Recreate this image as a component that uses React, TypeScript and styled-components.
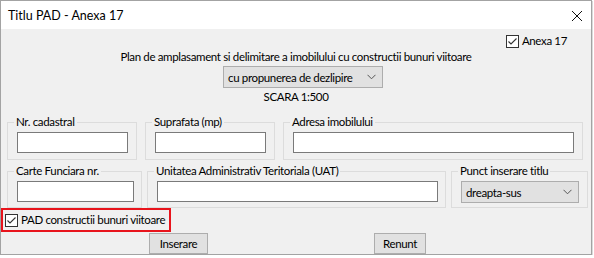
import styled, { createGlobalStyle } from 'styled-components';

const GlobalStyle = createGlobalStyle`
  html, body {
    margin: 0;
    padding: 0;
    background: #ffffff;
  }
  body {
    font-family: "Lato", "Segoe UI", sans-serif;
    font-size: 11.5px;
    letter-spacing: -0.35px;
    color: #000;
  }
`;

const Window = styled.div`
  width: 590px;
  height: 253px;
  border: 1px solid #a3a3a3;
  box-shadow: 1px 1px 0 #dadada;
  background: #f0f0f0;
  display: flex;
  flex-direction: column;
`;

const TitleBar = styled.div`
  height: 28px;
  background: #fff;
  display: flex;
  align-items: center;
  justify-content: space-between;
  padding: 0 8px 0 7px;
`;

const Title = styled.span`
  font-size: 12.5px;
  letter-spacing: 0;
`;

const CloseButton = styled.span`
  display: flex;
  width: 12px;
  height: 12px;
  margin-top: 1px;
`;

const Body = styled.div`
  flex: 1;
  display: flex;
  flex-direction: column;
`;

const TopRight = styled.div`
  display: flex;
  justify-content: flex-end;
  padding: 5px 24px 0 0;
`;

const CheckLabel = styled.label`
  display: flex;
  align-items: center;
  gap: 3px;
  line-height: 14px;
  white-space: nowrap;
`;

const Box = styled.span`
  width: 11px;
  height: 11px;
  border: 1px solid #333;
  background: #fff;
  display: flex;
  align-items: center;
  justify-content: center;
`;

const Heading = styled.div`
  text-align: center;
  line-height: 16px;
  margin-top: 1px;
`;

const CenterRow = styled.div`
  display: flex;
  justify-content: center;
  padding-left: 14px;
  margin-top: 1px;
`;

const Combo = styled.div<{ $w: number }>`
  width: ${p => p.$w}px;
  height: 22px;
  box-sizing: border-box;
  background: #e1e1e1;
  border: 1px solid #adadad;
  display: flex;
  align-items: center;
  justify-content: space-between;
  padding: 0 6px 0 4px;
  white-space: nowrap;
`;

const Scale = styled.div`
  text-align: center;
  line-height: 16px;
  margin-top: 1px;
`;

const GroupRow = styled.div<{ $cols: string; $top: number; $gap: number }>`
  display: grid;
  grid-template-columns: ${p => p.$cols};
  column-gap: ${p => p.$gap}px;
  padding-left: 6px;
  margin-top: ${p => p.$top}px;
`;

const Group = styled.fieldset<{ $pb: number }>`
  border: 1px solid #dcdcdc;
  margin: 0;
  padding: 2px 9px ${p => p.$pb}px;
  min-width: 0;
`;

const Legend = styled.legend`
  padding: 0 2px;
  margin-left: -3px;
  line-height: 16px;
  white-space: nowrap;
`;

const TextBox = styled.div<{ $w: number }>`
  width: ${p => p.$w}px;
  height: 21px;
  box-sizing: border-box;
  background: #fff;
  border: 1px solid #7a7a7a;
`;

const Highlight = styled.div`
  width: 170px;
  height: 24px;
  box-sizing: border-box;
  border: 2px solid #e8141c;
  display: flex;
  align-items: center;
  padding-left: 2px;
`;

const ButtonRow = styled.div`
  display: flex;
  gap: 166px;
  padding-left: 148px;
  margin-top: 1px;
`;

const Button = styled.div<{ $w: number }>`
  width: ${p => p.$w}px;
  height: 21px;
  box-sizing: border-box;
  background: #e1e1e1;
  border: 1px solid #adadad;
  display: flex;
  align-items: center;
  justify-content: center;
`;

const Check = () => (
  <Box>
    <svg width="11" height="11" viewBox="0 0 11 11">
      <path d="M1.5 5.5 L4 8 L9.5 2.5" fill="none" stroke="#333" strokeWidth="1.1" />
    </svg>
  </Box>
);

const Chevron = () => (
  <svg width="9" height="6" viewBox="0 0 9 6">
    <path d="M0.5 0.8 L4.5 4.8 L8.5 0.8" fill="none" stroke="#555" strokeWidth="1" />
  </svg>
);

const App = () => (
  <>
    <GlobalStyle />
    <Window>
      <TitleBar>
        <Title>Titlu PAD - Anexa 17</Title>
        <CloseButton>
          <svg width="12" height="12" viewBox="0 0 12 12">
            <path d="M1 1 L11 11 M11 1 L1 11" stroke="#111" strokeWidth="1" />
          </svg>
        </CloseButton>
      </TitleBar>
      <Body>
        <TopRight>
          <CheckLabel>
            <Check />
            Anexa 17
          </CheckLabel>
        </TopRight>
        <Heading>Plan de amplasament si delimitare a imobilului cu constructii bunuri viitoare</Heading>
        <CenterRow>
          <Combo $w={160}>
            cu propunerea de dezlipire
            <Chevron />
          </Combo>
        </CenterRow>
        <Scale>SCARA 1:500</Scale>
        <GroupRow $cols="130px 130px 300px" $top={9} $gap={8}>
          <Group $pb={6}>
            <Legend>Nr. cadastral</Legend>
            <TextBox $w={111} />
          </Group>
          <Group $pb={6}>
            <Legend>Suprafata (mp)</Legend>
            <TextBox $w={111} />
          </Group>
          <Group $pb={6}>
            <Legend>Adresa imobilului</Legend>
            <TextBox $w={281} />
          </Group>
        </GroupRow>
        <GroupRow $cols="135px 299px 137px" $top={3} $gap={5}>
          <Group $pb={4}>
            <Legend>Carte Funciara nr.</Legend>
            <TextBox $w={117} />
          </Group>
          <Group $pb={4}>
            <Legend>Unitatea Administrativ Teritoriala (UAT)</Legend>
            <TextBox $w={281} />
          </Group>
          <Group $pb={4}>
            <Legend>Punct inserare titlu</Legend>
            <Combo $w={118}>
              dreapta-sus
              <Chevron />
            </Combo>
          </Group>
        </GroupRow>
        <Highlight>
          <CheckLabel>
            <Check />
            PAD constructii bunuri viitoare
          </CheckLabel>
        </Highlight>
        <ButtonRow>
          <Button $w={59}>Inserare</Button>
          <Button $w={52}>Renunt</Button>
        </ButtonRow>
      </Body>
    </Window>
  </>
);

export default App;
